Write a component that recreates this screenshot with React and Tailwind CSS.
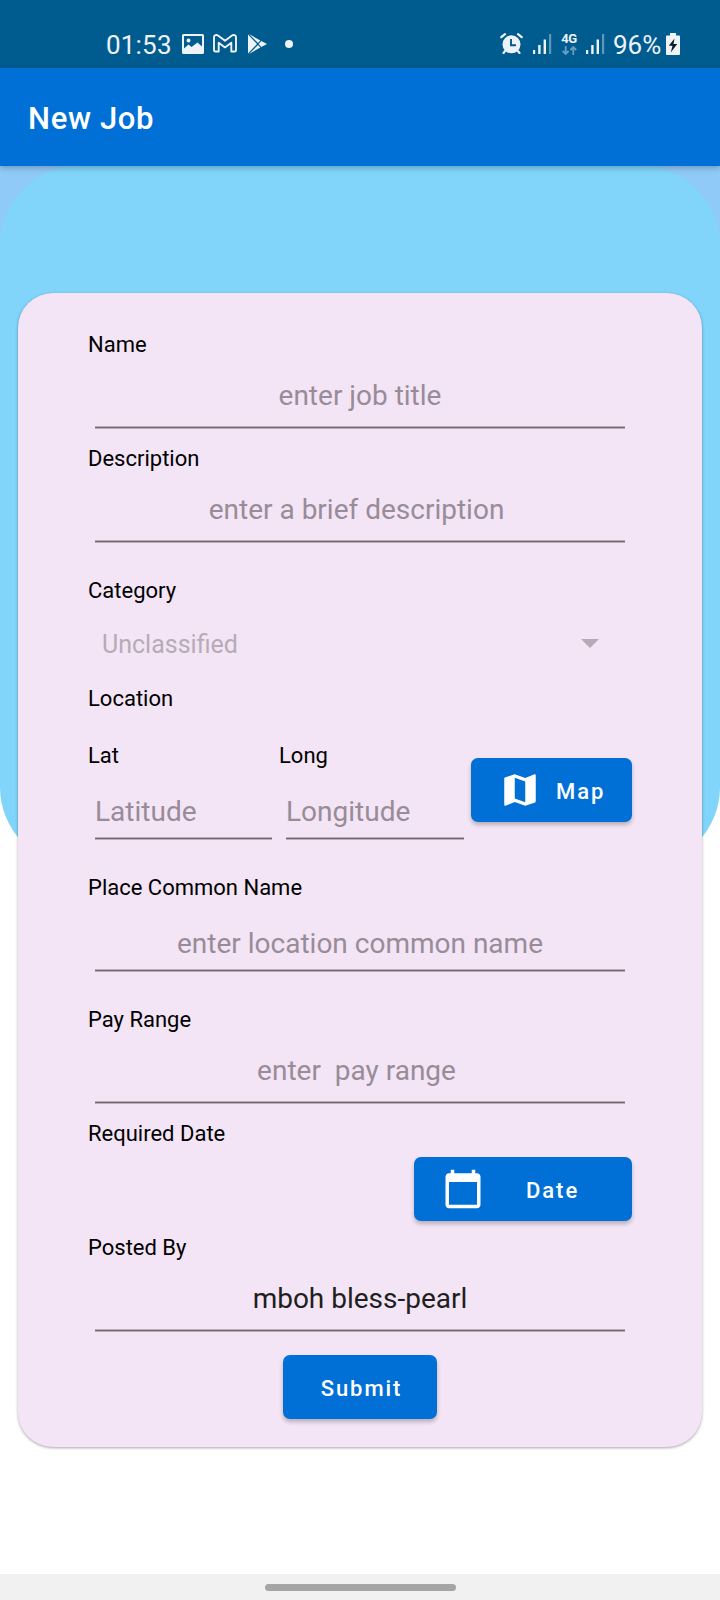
import { MdMap, MdCalendarToday } from "react-icons/md";

function Signal() {
  return (
    <svg className="h-5 w-[19px] shrink-0" viewBox="0 0 19 20" fill="#edf3f7">
      <rect x="0" y="16" width="2.2" height="4" />
      <rect x="5.2" y="11" width="2.4" height="9" />
      <rect x="10.6" y="5.5" width="2.4" height="14.5" />
      <rect x="16" y="0" width="2.2" height="20" opacity=".4" />
    </svg>
  );
}

function StatusBar() {
  return (
    <div className="flex h-[68px] shrink-0 items-start bg-[#005b8f] pt-[33px] text-[26px] leading-[24px] text-[#edf3f7]">
      <span className="ml-[106px] w-[76px] whitespace-nowrap tracking-[0.2px]">01:53</span>
      <svg className="mt-px h-5 w-[22px] shrink-0" viewBox="0 0 22 20">
        <path
          fill="#edf3f7"
          fillRule="evenodd"
          d="M1.500 0h19A1.500 1.500 0 0 1 22 1.500v17a1.500 1.500 0 0 1-1.500 1.500h-19A1.500 1.500 0 0 1 0 18.500v-17A1.500 1.500 0 0 1 1.500 0zM2 2v12.500l4.500-4 3 2.500L15.500 8.500l4.500 4V2zM6.500 4.500a2 2 0 1 1 0 4 2 2 0 0 1 0-4z"
        />
      </svg>
      <svg className="ml-[9px] mt-px h-[19px] w-6 shrink-0" viewBox="0 0 24 19" fill="none" stroke="#edf3f7" strokeWidth="1.9" strokeLinejoin="round">
        <path d="M1 3.200C1 1 3.500.4 5 1.600l7 5.200 7-5.200c1.500-1.200 4-.6 4 1.600v13c0 .8-.5 1.300-1.300 1.300h-3.400V8.800L12 13.400 5.700 8.800v8.700H2.300C1.500 17.500 1 17 1 16.200z" />
      </svg>
      <svg className="ml-[11px] mt-px h-5 w-[19px] shrink-0" viewBox="0 0 19 20" fill="#edf3f7">
        <path d="M0 .6v18.800L9 10zM1 0l9 9 2.400-2.400zM1 20l9-9 2.400 2.400zM13.300 7.100 10.600 10l2.700 2.900L19 10z" />
      </svg>
      <span className="ml-[18px] mt-[7px] size-2 shrink-0 rounded-full bg-[#edf3f7]" />
      <svg className="ml-[207px] h-[21px] w-[23px] shrink-0" viewBox="0 0 23 21">
        <g stroke="#edf3f7" strokeWidth="2.200" strokeLinecap="round">
          <path d="M1.300 4.200 5 1.200M21.700 4.200 18 1.200M5.500 17.500 3.500 20M17.500 17.500l2 2.500" />
        </g>
        <circle cx="11.500" cy="11.300" r="9" fill="#edf3f7" />
        <path d="M11 6v6.300h5" fill="none" stroke="#005b8f" strokeWidth="1.900" />
      </svg>
      <div className="ml-[10px] mt-px flex"><Signal /></div>
      <div className="ml-[8px] flex w-[18px] shrink-0 flex-col items-center">
        <span className="text-[13px] leading-[11px] font-bold tracking-[-0.3px]">4G</span>
        <svg className="mt-[2px] h-[9px] w-[15px]" viewBox="0 0 15 9" fill="none" stroke="#6a9dbd" strokeWidth="1.800">
          <path d="M3.700 0v8M.8 5l2.900 3 2.900-3M11.300 9V1M8.400 4l2.900-3 2.900 3" />
        </svg>
      </div>
      <div className="ml-[8px] mt-px flex"><Signal /></div>
      <span className="ml-[8px] w-[53px] shrink-0 whitespace-nowrap">96%</span>
      <svg className="h-[22px] w-[14px] shrink-0" viewBox="0 0 14 22">
        <path d="M4 0h6v2.500h2.800c.7 0 1.200.5 1.200 1.200v17c0 .7-.5 1.300-1.200 1.300H1.200C.5 22 0 21.400 0 20.700v-17c0-.7.5-1.200 1.200-1.200H4z" fill="#edf3f7" />
        <path d="M8.500 5.500 2.800 12.800h3.700l-1.700 6.700 6.400-8.500H7.500z" fill="#0c1a24" />
      </svg>
    </div>
  );
}

function Label({ children, className = "" }) {
  return (
    <div className={`h-[26px] shrink-0 text-[22px] leading-[26px] whitespace-nowrap text-black ${className}`}>
      {children}
    </div>
  );
}

function Field({ text, className = "mt-[21px]", textClass = "text-center text-[#988c98]", gap = "h-[14px]" }) {
  return (
    <div className={`mx-[7px] flex flex-col ${className}`}>
      <div className={`h-[33px] text-[28px] leading-[33px] whitespace-pre ${textClass}`}>{text}</div>
      <div className={gap} />
      <div className="h-[3px] border-y border-[#b9aeb9] bg-[#6f686f]" />
    </div>
  );
}

function Button({ children, className }) {
  return (
    <button
      className={`flex h-16 shrink-0 items-center rounded-[7px] bg-[#0070d6] text-[22px] font-medium tracking-[1.95px] text-white shadow-[0_3px_4px_rgba(0,0,0,0.24)] ${className}`}
    >
      {children}
    </button>
  );
}

export default function App() {
  return (
    <div className="flex h-[1600px] w-[720px] flex-col overflow-hidden bg-white font-[Roboto,sans-serif]">
      <StatusBar />
      <header className="relative z-10 flex h-[98px] shrink-0 items-center bg-[#0070d6] pt-[3px] pl-7 text-[31px] leading-[36px] font-medium tracking-[0.65px] text-white shadow-[0_2px_6px_rgba(0,0,0,0.25)]">
        New Job
      </header>
      <main className="relative flex-1 px-[18px] pt-[127px]">
        <div className="absolute inset-x-0 top-0 h-[200px] bg-[#90caf9]" />
        <div className="absolute inset-x-0 top-0 h-[700px] rounded-[79px] bg-[#81d4fa]" />
        <form className="relative flex h-[1154px] flex-col rounded-[35px] bg-[#f3e5f5] px-[70px] pt-[39px] shadow-[0_1px_3px_rgba(0,0,0,0.35)]">
          <Label>Name</Label>
          <Field text="enter job title" />
          <Label className="mt-[17px]">Description</Label>
          <Field text="enter a brief description " />
          <Label className="mt-[35px]">Category</Label>
          <div className="mt-[25px] flex h-[30px] items-center justify-between pr-[33px] pl-[14px] text-[25px] leading-[30px] text-[#b7abb8]">
            <span className="pt-[2px]">Unclassified</span>
            <svg className="mb-px h-[9px] w-[18px]" viewBox="0 0 18 9" fill="#b5aab6">
              <path d="M0 0h18L9 9z" />
            </svg>
          </div>
          <Label className="mt-[27px]">Location</Label>
          <div className="mt-[31px] flex h-[97px]">
            <div className="w-[191px]">
              <Label>Lat</Label>
              <Field text="Latitude" className="mt-[26px]" textClass="text-[#988c98]" gap="h-[9px]" />
            </div>
            <div className="w-[192px]">
              <Label>Long</Label>
              <Field text="Longitude" className="mt-[26px]" textClass="text-[#988c98]" gap="h-[9px]" />
            </div>
            <Button className="mt-[15px] w-[161px] pl-[28px]">
              <MdMap className="size-[42px]" />
              <span className="ml-[15px] pt-[2px]">Map</span>
            </Button>
          </div>
          <Label className="mt-[35px]">Place Common Name</Label>
          <Field text="enter location common name" className="mt-[26px]" gap="h-[9px]" />
          <Label className="mt-[35px]">Pay Range</Label>
          <Field text="enter  pay range " />
          <Label className="mt-[17px]">Required Date</Label>
          <Button className="mt-[10px] w-[218px] self-end pl-[28px]">
            <MdCalendarToday className="size-[42px]" />
            <span className="ml-[42px] pt-[2px]">Date</span>
          </Button>
          <Label className="mt-[14px]">Posted By</Label>
          <Field text="mboh bless-pearl" textClass="text-center text-[#201e20]" />
          <Button className="mt-[23px] w-[154px] justify-center self-center pt-[2px] pl-[3px]">Submit</Button>
        </form>
      </main>
      <footer className="flex h-[26px] shrink-0 items-center justify-center bg-[#f1f1f1] pt-px">
        <div className="h-[7px] w-[191px] rounded-full bg-[#a5a5a5]" />
      </footer>
    </div>
  );
}
